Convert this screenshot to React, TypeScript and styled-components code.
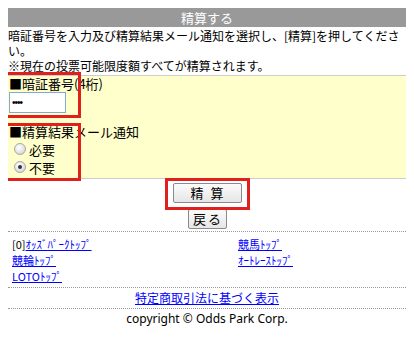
import React from "react";
import styled, { createGlobalStyle } from "styled-components";

const Global = createGlobalStyle`
  body {
    margin: 8px;
    background: #fff;
    color: #000;
    font-family: "Noto Sans CJK JP", "Noto Sans", sans-serif;
  }
`;

const Page = styled.div`
  position: relative;
  width: 398px;
`;

const Header = styled.div`
  height: 19px;
  line-height: 19px;
  background: #999999;
  color: #fff;
  font-size: 13px;
  text-align: center;
`;

const Intro = styled.div`
  font-size: 12px;
  line-height: 15px;
  padding-top: 1px;
  margin-bottom: 2px;
`;

const FormBox = styled.div`
  background: #ffffcc;
  border-top: 1px solid #cccccc;
  border-bottom: 1px solid #cccccc;
  padding: 0 0 2px 1px;
  font-size: 13px;
`;

const Section = styled.div<{ $gap?: number }>`
  margin-top: ${(p) => p.$gap ?? 0}px;
`;

const Label = styled.div`
  line-height: 16px;
  height: 16px;
  white-space: nowrap;
`;

const PinInput = styled.input`
  box-sizing: border-box;
  width: 57px;
  height: 21px;
  margin: 0;
  border: 1px solid #7fa9d9;
  padding: 0 2px;
  font-size: 10px;
  letter-spacing: -1px;
  background: #fff;
  outline: none;
  display: block;
`;

const RadioRow = styled.label`
  display: flex;
  align-items: center;
  height: 18px;
  padding-left: 5px;
  gap: 3px;
`;

const Radio = styled.input`
  appearance: none;
  margin: 0;
  width: 12px;
  height: 12px;
  border-radius: 50%;
  border: 1px solid #a8a8a8;
  background: radial-gradient(circle at 40% 35%, #ffffff 0%, #e4e4e4 55%, #c8c8c8 100%);
  display: grid;
  place-items: center;
  &:checked::after {
    content: "";
    width: 4px;
    height: 4px;
    border-radius: 50%;
    background: #333;
  }
`;

const Buttons = styled.div`
  display: flex;
  flex-direction: column;
  align-items: center;
  padding-top: 4px;
  gap: 6px;
  padding-bottom: 2px;
`;

const Button = styled.button<{ $w: number }>`
  width: ${(p) => p.$w}px;
  height: 20px;
  padding: 0;
  font-family: "Noto Sans CJK JP", sans-serif;
  font-size: 13px;
  line-height: 18px;
  color: #000;
  border: 1px solid #8a8a8a;
  border-radius: 2px;
  background: linear-gradient(#fbfbfb, #e6e6e6);
  letter-spacing: 2px;
  text-indent: 2px;
`;

const Dotted = styled.div`
  border-top: 1px dotted #999;
`;

const LinkGrid = styled.div`
  display: grid;
  grid-template-columns: 226px 1fr;
  grid-auto-rows: 16px;
  padding: 4px 4px 3px 4px;
  font-size: 11px;
  line-height: 16px;
`;

const Cell = styled.div`
  white-space: nowrap;
`;

const A = styled.a`
  color: #0000ff;
  text-decoration: underline;
`;

const LegalRow = styled.div`
  text-align: center;
  font-size: 12px;
  line-height: 20px;
`;

const Copyright = styled.div`
  text-align: center;
  font-family: "Noto Sans", sans-serif;
  font-size: 12px;
  line-height: 20px;
`;

const Highlight = styled.div<{ $x: number; $y: number; $w: number; $h: number }>`
  position: absolute;
  left: ${(p) => p.$x}px;
  top: ${(p) => p.$y}px;
  width: ${(p) => p.$w}px;
  height: ${(p) => p.$h}px;
  box-sizing: border-box;
  border: 3px solid #e0201c;
  pointer-events: none;
`;

export default function App() {
  return (
    <>
      <Global />
      <Page>
        <Header>精算する</Header>
        <Intro>
          暗証番号を入力及び精算結果メール通知を選択し、[精算]を押してくださ
          <br />
          い。
          <br />
          ※現在の投票可能限度額すべてが精算されます。
        </Intro>
        <FormBox>
          <Section>
            <Label>■暗証番号(4桁)</Label>
            <PinInput type="password" defaultValue="1234" />
          </Section>
          <Section $gap={11}>
            <Label>■精算結果メール通知</Label>
            <RadioRow>
              <Radio type="radio" name="mail" />
              必要
            </RadioRow>
            <RadioRow>
              <Radio type="radio" name="mail" defaultChecked />
              不要
            </RadioRow>
          </Section>
        </FormBox>
        <Buttons>
          <Button $w={69}>精 算</Button>
          <Button $w={39}>戻る</Button>
        </Buttons>
        <Dotted />
        <LinkGrid>
          <Cell>
            [0]<A href="#">ｵｯｽﾞﾊﾟｰｸﾄｯﾌﾟ</A>
          </Cell>
          <Cell>
            <A href="#">競馬ﾄｯﾌﾟ</A>
          </Cell>
          <Cell>
            <A href="#">競輪ﾄｯﾌﾟ</A>
          </Cell>
          <Cell>
            <A href="#">ｵｰﾄﾚｰｽﾄｯﾌﾟ</A>
          </Cell>
          <Cell>
            <A href="#">LOTOﾄｯﾌﾟ</A>
          </Cell>
        </LinkGrid>
        <Dotted />
        <LegalRow>
          <A href="#">特定商取引法に基づく表示</A>
        </LegalRow>
        <Dotted />
        <Copyright>copyright © Odds Park Corp.</Copyright>
        <Highlight $x={-5} $y={64} $w={78} $h={46} />
        <Highlight $x={-5} $y={115} $w={78} $h={58} />
        <Highlight $x={157} $y={170} $w={85} $h={32} />
      </Page>
    </>
  );
}
